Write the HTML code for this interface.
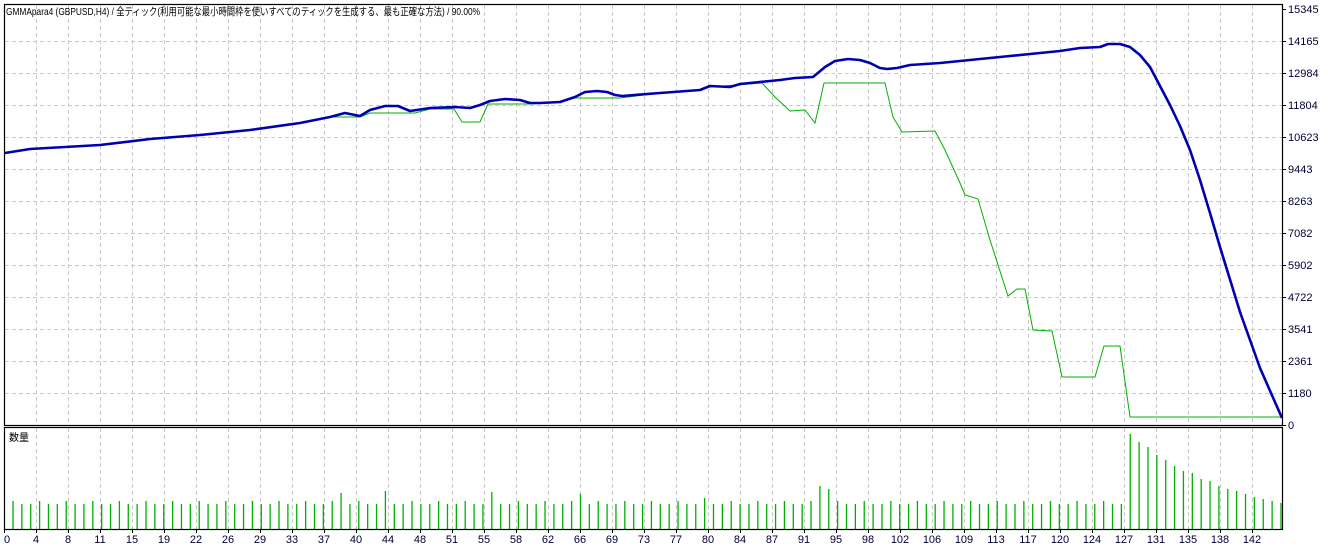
<!DOCTYPE html>
<html><head><meta charset="utf-8"><style>
html,body{margin:0;padding:0;background:#fff;width:1328px;height:547px;overflow:hidden}
svg{display:block}
text{font-family:"Liberation Sans","Noto Sans CJK JP",sans-serif;font-size:11px;fill:#000}
</style></head><body>
<svg id="s" width="1328" height="547" xmlns="http://www.w3.org/2000/svg">
<g id="grid" stroke="#c8c8c8" stroke-dasharray="4,3" stroke-width="1"></g>
<polyline fill="none" stroke="#00b000" stroke-width="1" points="5,153 30,149 100,145 150,139 200,135 250,130 300,123 327,117 360,117 370,113 415,113 430,109 454,109 462,122 480,122 488,104 530,104 560,102 575,98 620,98 660,93 700,90 710,87 762,83 775,97 790,111 805,110 815,123 824,83 885,83 893,117 902,132 935,131 945,150 960,183 965,195 978,199 990,240 1008,296 1017,289 1025,289 1033,330 1052,331 1062,377 1095,377 1104,346 1120,346 1130,417 1282,417"/>
<polyline fill="none" stroke="#0000b0" stroke-width="2.6" stroke-linejoin="round" points="5,153 30,149 100,145 150,139 200,135 250,130 300,123 330,117 345,113 360,116 370,110 385,106 398,106 410,111 430,108 455,107 470,108 480,105 490,101 505,99 520,100 530,103 540,103 560,102 575,97 585,92 597,91 607,92 615,95 622,96 660,93 700,90 710,86 730,87 740,84 760,82 780,80 795,78 813,77 825,67 835,61 848,59 860,60 870,63 880,68 887,69 897,68 910,65 940,63 970,60 1000,57 1030,54 1060,51 1080,48 1100,47 1108,44 1120,44 1130,47 1140,55 1150,67 1160,86 1170,105 1180,126 1190,150 1200,180 1210,213 1220,247 1240,312 1260,368 1282,418"/>
<g id="bars" stroke="#00b000" stroke-width="1.3"></g>
<rect x="4.5" y="4.5" width="1278" height="421" fill="none" stroke="#000" stroke-width="1.2"/>
<rect x="4.5" y="427.5" width="1278" height="102" fill="none" stroke="#000" stroke-width="1.2"/>
<g id="ax"></g>
<text x="6" y="15" textLength="474" lengthAdjust="spacingAndGlyphs" style="font-size:10.5px">GMMApara4 (GBPUSD,H4) / 全ティック(利用可能な最小時間枠を使いすべてのティックを生成する、最も正確な方法) / 90.00%</text>
<text x="9" y="441" style="font-size:10px">数量</text>
</svg>
<script>
(function(){
var ns="http://www.w3.org/2000/svg",g=document.getElementById('grid'),b=document.getElementById('bars'),ax=document.getElementById('ax');
function el(p,t,a){var e=document.createElementNS(ns,t);for(var k in a)e.setAttribute(k,a[k]);p.appendChild(e);return e;}
for(var y=41;y<425;y+=32)el(g,'line',{x1:5,x2:1282,y1:y+.5,y2:y+.5});
for(var x=36;x<=1252;x+=32){el(g,'line',{x1:x+.5,x2:x+.5,y1:5,y2:425});el(g,'line',{x1:x+.5,x2:x+.5,y1:428,y2:529});}
var vals=["15345","14165","12984","11804","10623","9443","8263","7082","5902","4722","3541","2361","1180","0"];
for(var i=0;i<14;i++){var yy=9+32*i;el(ax,'line',{x1:1283,x2:1286,y1:yy+.5,y2:yy+.5,stroke:'#000'});var t=el(ax,'text',{x:1288,y:yy+4});t.textContent=vals[i];t.setAttribute('style','fill:#000033');}
var xl=[0,4,8,11,15,19,22,26,29,33,37,40,44,48,51,55,58,62,66,69,73,77,80,84,87,91,95,98,102,106,109,113,117,120,124,127,131,135,138,142];
for(var i=0;i<xl.length;i++){var xx=i==0?4:36+32*(i-1);el(ax,'line',{x1:xx+.5,x2:xx+.5,y1:530,y2:533,stroke:'#000'});var t=el(ax,'text',{x:xx,y:543,'text-anchor':i==0?'start':'middle'});t.textContent=xl[i];t.setAttribute('style','fill:#000033');}
var big={37:493,42:491,54:492,64:494,78:498,91:486,92:489};
var tall=[434,442,447,455,460,466,471,473,479,481,486,489,491,494,497,499,501,503];
for(var i=0;i<144;i++){var bx=13+i*8.867;var tp=(i%3==0)?501:504;if(big[i])tp=big[i];
if(i>=126){tp=tall[i-126]||503;}
el(b,'line',{x1:bx,x2:bx,y1:529,y2:tp});}
})();
</script>
</body></html>
